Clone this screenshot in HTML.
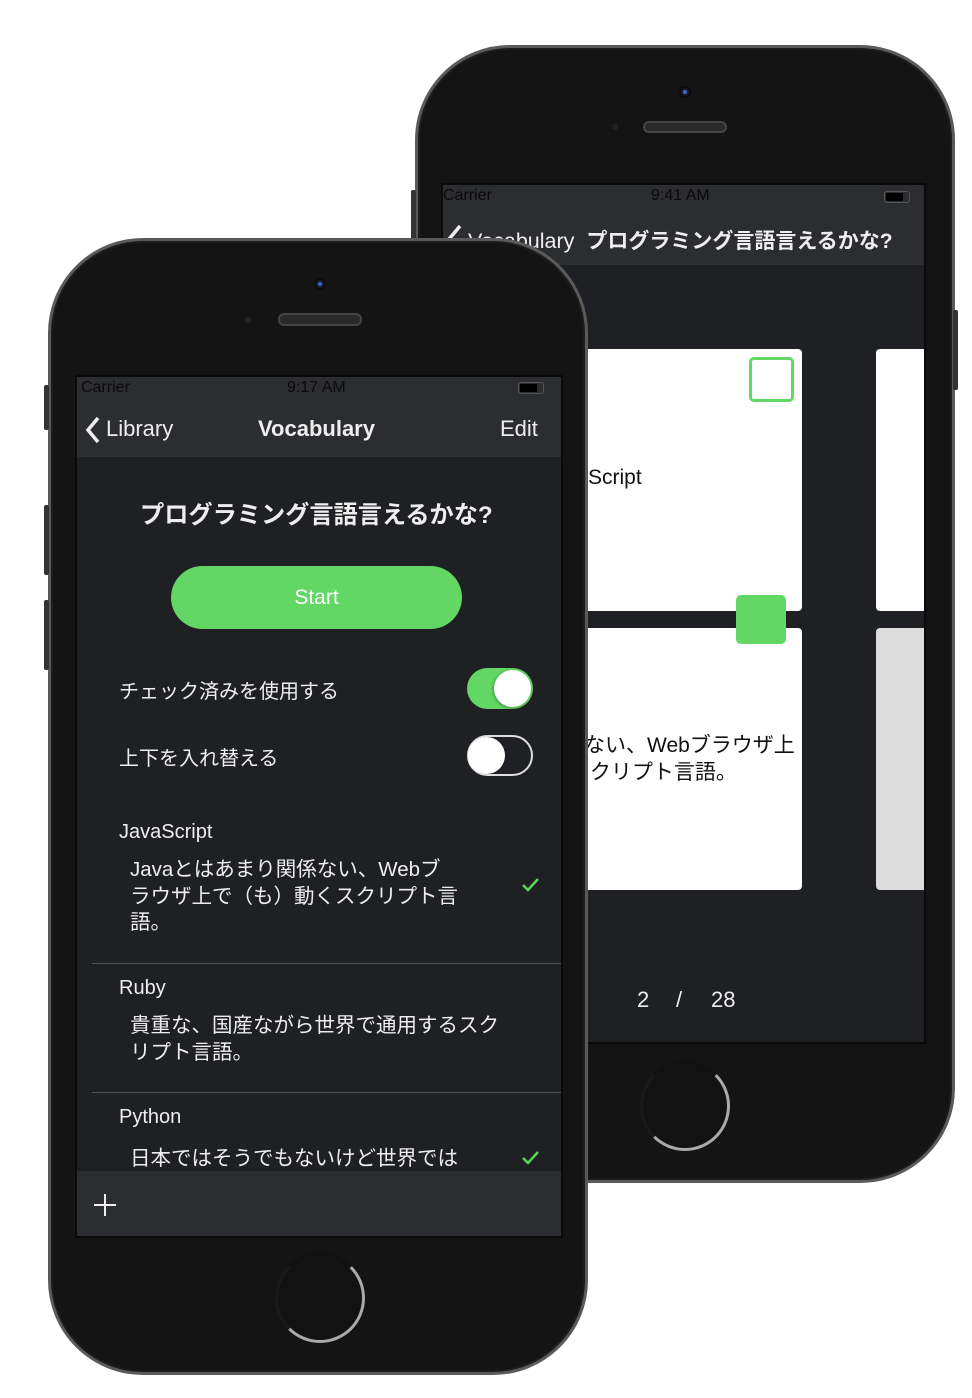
<!DOCTYPE html>
<html><head><meta charset="utf-8"><style>
*{margin:0;padding:0;box-sizing:border-box}
body{width:972px;height:1398px;background:#fff;position:relative;overflow:hidden;font-family:"Liberation Sans","Noto Sans CJK JP",sans-serif;color:#eee}
.a{position:absolute}
.body{background:#141414;border:3px solid #5a5a5a;box-shadow:inset 0 0 0 2px #1c1c1c}
.t{position:absolute;white-space:nowrap}
.hb{border-radius:50%;border:3px solid #aaa;border-top-color:#111;border-left-color:#1a1a1a;background:#121212}
</style></head><body>
<!-- BACK PHONE -->
<div class="a body" style="left:415px;top:45px;width:540px;height:1138px;border-radius:95px"></div>
<div class="a" style="left:411px;top:190px;width:5px;height:70px;background:#333;border-radius:2px"></div>
<div class="a" style="left:953px;top:310px;width:5px;height:80px;background:#333;border-radius:2px"></div>
<div class="a" style="left:681px;top:88px;width:8px;height:8px;border-radius:50%;background:#1a1a2a;box-shadow:0 0 0 2px #0d0d0d"></div>
<div class="a" style="left:683px;top:90px;width:4px;height:4px;border-radius:50%;background:#3a6ad0"></div>
<div class="a" style="left:643px;top:121px;width:84px;height:12px;border-radius:6px;background:#2a2a2a;border:2px solid #444"></div>
<div class="a" style="left:612px;top:124px;width:6px;height:6px;border-radius:50%;background:#222"></div>
<div class="a" style="left:441px;top:183px;width:485px;height:861px;background:#1f2023;border:2px solid #0a0a0a"></div>
<div class="a" style="left:443px;top:185px;width:481px;height:80px;background:#2c2d30"></div>
<div class="t" style="left:443px;top:187px;font-size:16px;color:#0a0a0a">Carrier</div>
<div class="t" style="left:651px;top:187px;font-size:16px;color:#0a0a0a">9:41 AM</div>
<div class="a" style="left:884px;top:191px;width:26px;height:12px;border:1px solid #555;border-radius:3px;padding:1px"><div style="width:17px;height:8px;background:#000"></div></div>
<svg class="a" style="left:446px;top:224px" width="18" height="28"><path d="M14 2 L4 14 L14 26" stroke="#eee" stroke-width="3.5" fill="none"/></svg>
<div class="t" style="left:468px;top:225px;font-size:21.5px;color:#eee">Vocabulary&nbsp; <b style="font-size:21px">プログラミング言語言えるかな?</b></div>
<div class="a" style="left:560px;top:349px;width:242px;height:262px;background:#fff;border-radius:4px"></div>
<div class="a" style="left:749px;top:357px;width:45px;height:45px;border:3px solid #62d764;border-radius:5px"></div>
<div class="t" style="left:588px;top:466px;font-size:21px;color:#111">Script</div>
<div class="a" style="left:560px;top:628px;width:242px;height:262px;background:#fff;border-radius:4px"></div>
<div class="t" style="left:584px;top:732px;font-size:21px;color:#111;line-height:27px">ない、Webブラウザ上<br>.クリプト言語。</div>
<div class="a" style="left:736px;top:595px;width:50px;height:49px;background:#62d764;border-radius:5px"></div>
<div class="a" style="left:876px;top:349px;width:48px;height:262px;background:#fff;border-radius:4px 0 0 4px"></div>
<div class="a" style="left:876px;top:628px;width:48px;height:262px;background:#dcdcdc;border-radius:4px 0 0 4px"></div>
<div class="t" style="left:637px;top:987px;font-size:22px;color:#eee">2</div>
<div class="t" style="left:676px;top:987px;font-size:22px;color:#eee">/</div>
<div class="t" style="left:711px;top:987px;font-size:22px;color:#eee">28</div>
<div class="a hb" style="left:640px;top:1061px;width:90px;height:90px"></div>

<!-- FRONT PHONE -->
<div class="a body" style="left:48px;top:238px;width:540px;height:1137px;border-radius:95px"></div>
<div class="a" style="left:44px;top:385px;width:5px;height:45px;background:#333;border-radius:2px"></div>
<div class="a" style="left:44px;top:505px;width:5px;height:70px;background:#333;border-radius:2px"></div>
<div class="a" style="left:44px;top:600px;width:5px;height:70px;background:#333;border-radius:2px"></div>
<div class="a" style="left:316px;top:280px;width:8px;height:8px;border-radius:50%;background:#1a1a2a;box-shadow:0 0 0 2px #0d0d0d"></div>
<div class="a" style="left:318px;top:282px;width:4px;height:4px;border-radius:50%;background:#3a6ad0"></div>
<div class="a" style="left:278px;top:313px;width:84px;height:13px;border-radius:6px;background:#2a2a2a;border:2px solid #444"></div>
<div class="a" style="left:245px;top:317px;width:6px;height:6px;border-radius:50%;background:#222"></div>
<div class="a" style="left:75px;top:375px;width:488px;height:863px;background:#1f2023;border:2px solid #0a0a0a"></div>
<div class="a" style="left:77px;top:377px;width:484px;height:80px;background:#2c2d30"></div>
<div class="t" style="left:81px;top:379px;font-size:16px;color:#0a0a0a">Carrier</div>
<div class="t" style="left:287px;top:379px;font-size:16px;color:#0a0a0a">9:17 AM</div>
<div class="a" style="left:518px;top:382px;width:26px;height:12px;border:1px solid #555;border-radius:3px;padding:1px"><div style="width:17px;height:8px;background:#000"></div></div>
<svg class="a" style="left:84px;top:416px" width="18" height="28"><path d="M14 2 L4 14 L14 26" stroke="#eee" stroke-width="3.5" fill="none"/></svg>
<div class="t" style="left:106px;top:416px;font-size:22px">Library</div>
<div class="t" style="left:258px;top:416px;font-size:22px;font-weight:bold">Vocabulary</div>
<div class="t" style="left:500px;top:416px;font-size:22px">Edit</div>
<div class="t" style="left:140px;top:495px;font-size:24.2px;font-weight:bold">プログラミング言語言えるかな?</div>
<div class="a" style="left:171px;top:566px;width:291px;height:63px;background:#62d764;border-radius:32px;text-align:center;line-height:63px;font-size:21px;color:#fff">Start</div>
<div class="t" style="left:119px;top:675px;font-size:20px">チェック済みを使用する</div>
<div class="a" style="left:467px;top:668px;width:66px;height:41px;background:#62d764;border-radius:21px"></div>
<div class="a" style="left:494px;top:670px;width:37px;height:37px;background:#fff;border-radius:50%;box-shadow:-1px 1px 3px rgba(0,0,0,.3)"></div>
<div class="t" style="left:119px;top:742px;font-size:20px">上下を入れ替える</div>
<div class="a" style="left:467px;top:735px;width:66px;height:41px;border:2px solid #ddd;border-radius:21px"></div>
<div class="a" style="left:468px;top:737px;width:37px;height:37px;background:#fff;border-radius:50%"></div>
<div class="t" style="left:119px;top:821px;font-size:20px">JavaScript</div>
<div class="t" style="left:130px;top:857px;font-size:20.5px;line-height:26.5px">Javaとはあまり関係ない、Webブ<br>ラウザ上で（も）動くスクリプト言<br>語。</div>
<svg class="a" style="left:520px;top:876px" width="22" height="18"><path d="M3 9 L8 14 L18 3" stroke="#5bd45c" stroke-width="2.5" fill="none"/></svg>
<div class="a" style="left:92px;top:963px;width:469px;height:1px;background:#555"></div>
<div class="t" style="left:119px;top:977px;font-size:20px">Ruby</div>
<div class="t" style="left:130px;top:1013px;font-size:20.5px;line-height:26.5px">貴重な、国産ながら世界で通用するスク<br>リプト言語。</div>
<div class="a" style="left:92px;top:1092px;width:469px;height:1px;background:#555"></div>
<div class="t" style="left:119px;top:1106px;font-size:20px">Python</div>
<div class="t" style="left:130px;top:1141px;font-size:20.5px">日本ではそうでもないけど世界では</div>
<svg class="a" style="left:520px;top:1149px" width="22" height="18"><path d="M3 9 L8 14 L18 3" stroke="#5bd45c" stroke-width="2.5" fill="none"/></svg>
<div class="a" style="left:77px;top:1171px;width:484px;height:65px;background:#2c2d30"></div>
<svg class="a" style="left:93px;top:1193px" width="24" height="24"><path d="M12 1V23M1 12H23" stroke="#eee" stroke-width="2"/></svg>
<div class="a hb" style="left:275px;top:1253px;width:90px;height:90px"></div>
</body></html>
